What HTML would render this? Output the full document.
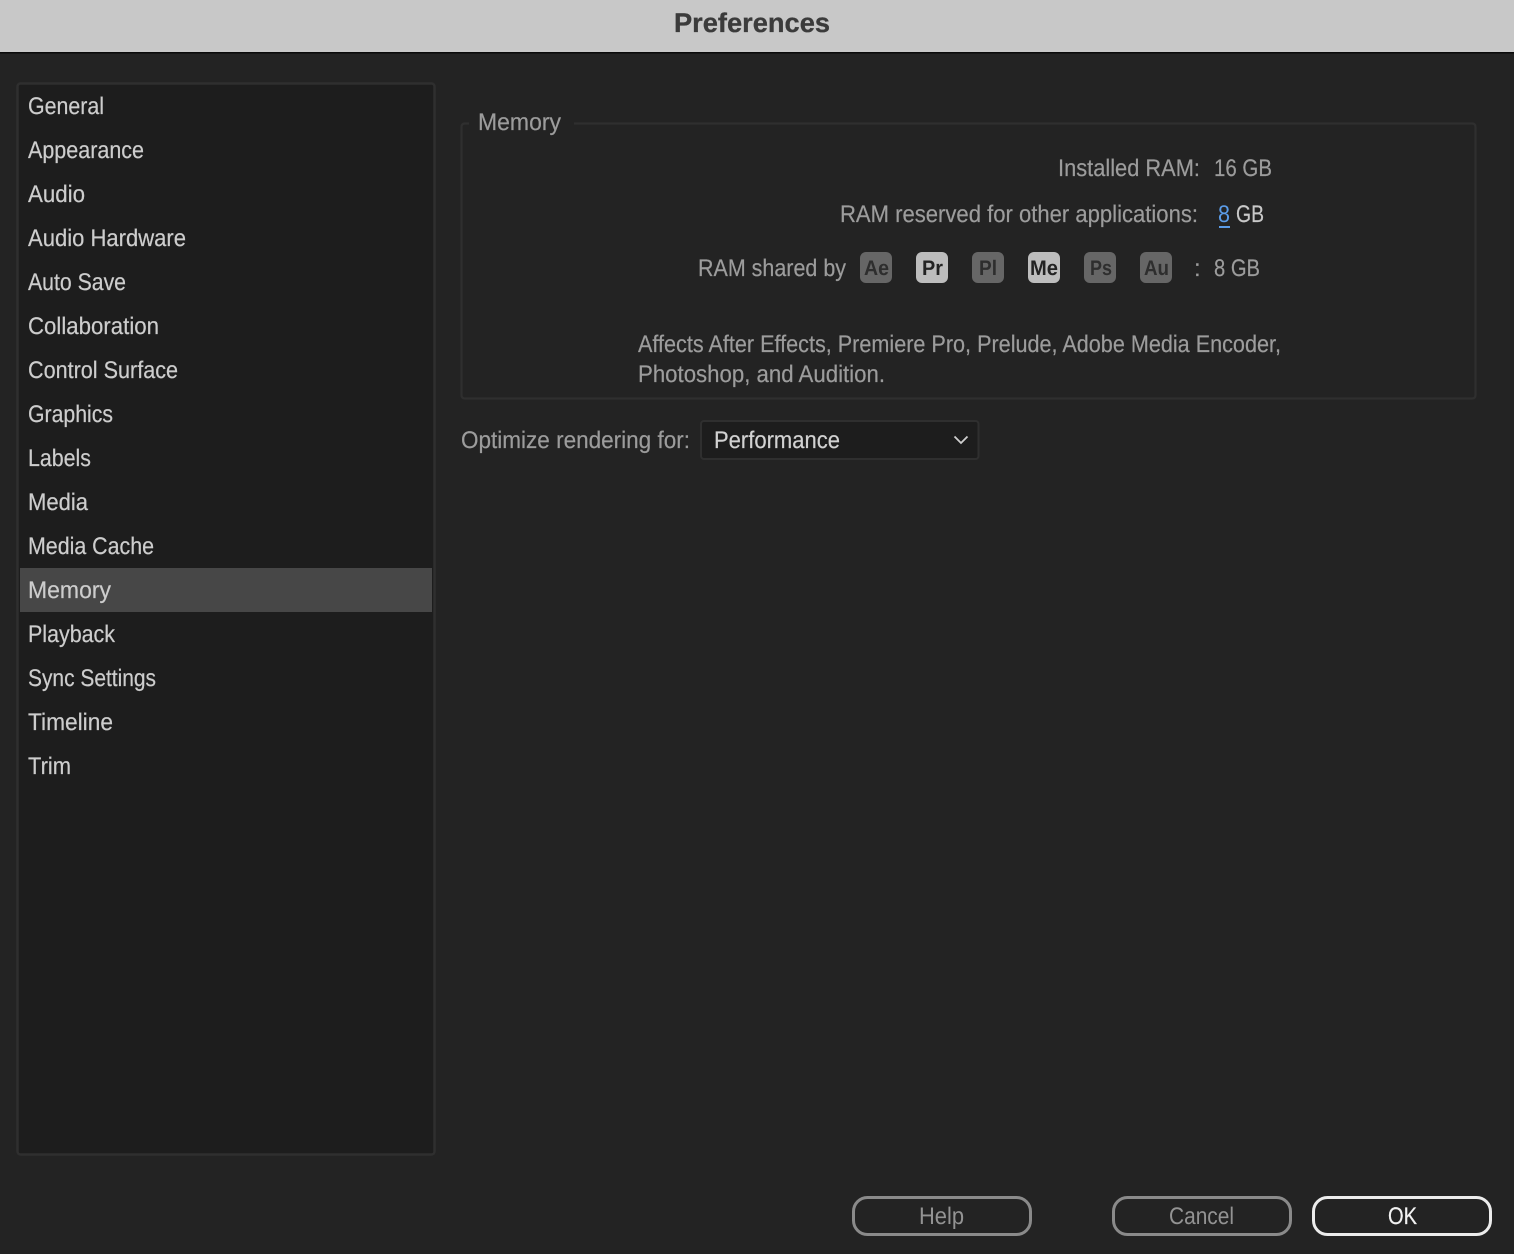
<!DOCTYPE html>
<html><head><meta charset="utf-8"><title>Preferences</title>
<style>
html,body{margin:0;padding:0;background:#232323;width:1514px;height:1254px;overflow:hidden}
svg{display:block}
text{font-family:"Liberation Sans",sans-serif;font-size:24px;text-rendering:geometricPrecision}
.s text{fill:#cdcdcd;stroke:#cdcdcd;stroke-width:.2px}
.d text{fill:#9c9c9c;stroke:#9c9c9c;stroke-width:.2px}
.b{font-weight:bold;font-size:21px}
</style></head><body>
<svg xmlns="http://www.w3.org/2000/svg" width="1514" height="1254" viewBox="0 0 1514 1254">
<rect width="1514" height="1254" fill="#232323"/>
<rect width="1514" height="52" fill="#c8c8c8"/>
<rect y="52" width="1514" height="1.5" fill="#0a0a0a"/>
<text x="674" y="32" textLength="156" lengthAdjust="spacingAndGlyphs" style="font-size:27px;font-weight:bold;stroke:#3b3b3b;stroke-width:.3px" fill="#3b3b3b">Preferences</text>

<rect x="17.5" y="83.5" width="417" height="1071" rx="3" fill="#1d1d1d" stroke="#2f2f2f" stroke-width="2.5"/>
<rect x="20" y="568" width="412" height="44" fill="#474747"/>
<g class="s">
<text x="28" y="114" textLength="76" lengthAdjust="spacingAndGlyphs">General</text>
<text x="28" y="158" textLength="116" lengthAdjust="spacingAndGlyphs">Appearance</text>
<text x="28" y="202" textLength="57" lengthAdjust="spacingAndGlyphs">Audio</text>
<text x="28" y="246" textLength="158" lengthAdjust="spacingAndGlyphs">Audio Hardware</text>
<text x="28" y="290" textLength="98" lengthAdjust="spacingAndGlyphs">Auto Save</text>
<text x="28" y="334" textLength="131" lengthAdjust="spacingAndGlyphs">Collaboration</text>
<text x="28" y="378" textLength="150" lengthAdjust="spacingAndGlyphs">Control Surface</text>
<text x="28" y="422" textLength="85" lengthAdjust="spacingAndGlyphs">Graphics</text>
<text x="28" y="466" textLength="63" lengthAdjust="spacingAndGlyphs">Labels</text>
<text x="28" y="510" textLength="60" lengthAdjust="spacingAndGlyphs">Media</text>
<text x="28" y="554" textLength="126" lengthAdjust="spacingAndGlyphs">Media Cache</text>
<text x="28" y="598" textLength="83" lengthAdjust="spacingAndGlyphs">Memory</text>
<text x="28" y="642" textLength="87" lengthAdjust="spacingAndGlyphs">Playback</text>
<text x="28" y="686" textLength="128" lengthAdjust="spacingAndGlyphs">Sync Settings</text>
<text x="28" y="730" textLength="85" lengthAdjust="spacingAndGlyphs">Timeline</text>
<text x="28" y="774" textLength="43" lengthAdjust="spacingAndGlyphs">Trim</text>
</g>

<path d="M469 123.5H465Q461.5 123.5 461.5 127V395Q461.5 398.5 465 398.5H1472Q1475.5 398.5 1475.5 395V127Q1475.5 123.5 1472 123.5H574" fill="none" stroke="#2f2f2f" stroke-width="2.2"/>
<g class="d">
<text x="478" y="130" textLength="83" lengthAdjust="spacingAndGlyphs">Memory</text>
<text x="1058" y="176" textLength="142" lengthAdjust="spacingAndGlyphs">Installed RAM:</text>
<text x="1214" y="176" textLength="58" lengthAdjust="spacingAndGlyphs">16 GB</text>
<text x="840" y="222" textLength="358" lengthAdjust="spacingAndGlyphs">RAM reserved for other applications:</text>
<text x="698" y="276" textLength="148" lengthAdjust="spacingAndGlyphs">RAM shared by</text>
<text x="1194" y="276">:</text>
<text x="1214" y="276" textLength="46" lengthAdjust="spacingAndGlyphs">8 GB</text>
<text x="638" y="352" textLength="643" lengthAdjust="spacingAndGlyphs">Affects After Effects, Premiere Pro, Prelude, Adobe Media Encoder,</text>
<text x="638" y="382" textLength="247" lengthAdjust="spacingAndGlyphs">Photoshop, and Audition.</text>
<text x="461" y="448" textLength="229" lengthAdjust="spacingAndGlyphs">Optimize rendering for:</text>
</g>
<text x="1218" y="222" textLength="12" lengthAdjust="spacingAndGlyphs" fill="#5b9ce8">8</text>
<rect x="1219" y="226" width="11" height="2" fill="#5b9ce8"/>
<text x="1236" y="222" textLength="28" lengthAdjust="spacingAndGlyphs" fill="#c8c8c8" stroke="#c8c8c8" stroke-width=".2">GB</text>

<rect x="860" y="252" width="32" height="31" rx="6" fill="#666"/>
<rect x="916" y="252" width="32" height="31" rx="6" fill="#bdbdbd"/>
<rect x="972" y="252" width="32" height="31" rx="6" fill="#666"/>
<rect x="1028" y="252" width="32" height="31" rx="6" fill="#bdbdbd"/>
<rect x="1084" y="252" width="32" height="31" rx="6" fill="#666"/>
<rect x="1140" y="252" width="32" height="31" rx="6" fill="#666"/>
<text class="b" x="864" y="275" textLength="25" lengthAdjust="spacingAndGlyphs" fill="#2e2e2e">Ae</text>
<text class="b" x="922" y="275" textLength="21" lengthAdjust="spacingAndGlyphs" fill="#232323">Pr</text>
<text class="b" x="979" y="275" textLength="18" lengthAdjust="spacingAndGlyphs" fill="#2e2e2e">Pl</text>
<text class="b" x="1030" y="275" textLength="28" lengthAdjust="spacingAndGlyphs" fill="#232323">Me</text>
<text class="b" x="1090" y="275" textLength="22" lengthAdjust="spacingAndGlyphs" fill="#2e2e2e">Ps</text>
<text class="b" x="1144" y="275" textLength="25" lengthAdjust="spacingAndGlyphs" fill="#2e2e2e">Au</text>

<rect x="701" y="421" width="277.5" height="38" rx="3" fill="#1d1d1d" stroke="#2f2f2f" stroke-width="2"/>
<text x="714" y="448" textLength="126" lengthAdjust="spacingAndGlyphs" fill="#d2d2d2" stroke="#d2d2d2" stroke-width=".2">Performance</text>
<path d="M954.5 436.5L961 443L967.5 436.5" fill="none" stroke="#cfcfcf" stroke-width="1.8"/>

<rect x="853.5" y="1197.5" width="177" height="37" rx="14" fill="none" stroke="#8a8a8a" stroke-width="3"/>
<rect x="1113.5" y="1197.5" width="177" height="37" rx="14" fill="none" stroke="#8a8a8a" stroke-width="3"/>
<rect x="1313.5" y="1197.5" width="177" height="37" rx="14" fill="none" stroke="#ececec" stroke-width="3"/>
<text x="919" y="1224" textLength="45" lengthAdjust="spacingAndGlyphs" fill="#939393">Help</text>
<text x="1169" y="1224" textLength="65" lengthAdjust="spacingAndGlyphs" fill="#939393">Cancel</text>
<text x="1388" y="1224" textLength="29" lengthAdjust="spacingAndGlyphs" fill="#f2f2f2" stroke="#f2f2f2" stroke-width=".2">OK</text>
</svg>
</body></html>
